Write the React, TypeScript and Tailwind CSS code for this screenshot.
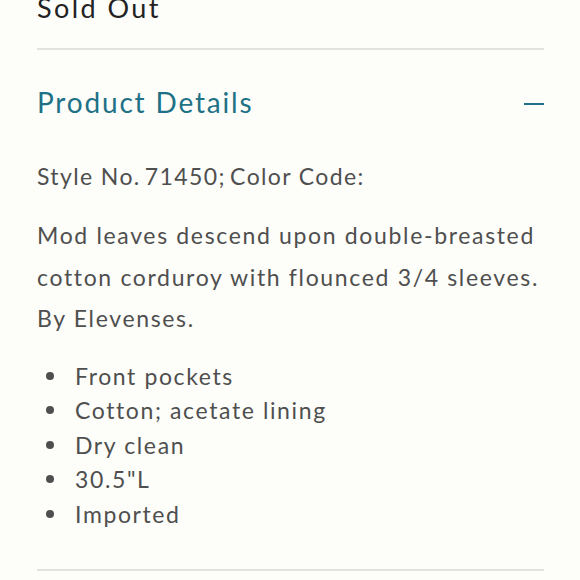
const bullets = ['Front pockets', 'Cotton; acetate lining', 'Dry clean', '30.5"L', 'Imported'];

export default function App() {
  return (
    <div
      className="min-h-[580px] w-[580px] overflow-hidden bg-[#fdfdf9] pl-[37px] pr-[36px] text-[#4f4f4f]"
      style={{ fontFamily: "Lato, 'Open Sans', sans-serif" }}
    >
      {/* Sold out row (scrolled partly off) */}
      <div className="-mt-[10px] pb-[22px] text-[27px] leading-[36px] tracking-[0.09em] text-[#222]">Sold Out</div>
      <div className="h-[2px] bg-[#e2e2df]" />

      {/* Accordion header */}
      <div className="flex items-start justify-between pt-[34px]">
        <h2 className="text-[28px] leading-[36px] tracking-[0.065em] text-[#1e7186]">Product Details</h2>
        <div className="mt-[19px] h-[2px] w-[20px] bg-[#1e7186]" />
      </div>

      {/* Body */}
      <p className="mt-[40px] text-[23px] leading-[32px] tracking-[0.06em]">Style No.&thinsp;71450;&thinsp;Color Code:</p>
      <p className="mt-[23px] text-[23px] leading-[41.5px] tracking-[0.072em]">
        Mod leaves descend upon double-breasted cotton corduroy with flounced 3/4 sleeves. By Elevenses.
      </p>
      <ul className="mt-[19px] pb-[38px]">
        {bullets.map((b) => (
          <li key={b} className="flex items-center text-[23px] leading-[34.5px] tracking-[0.07em]">
            <span className="ml-[9px] mr-[21px] h-[8px] w-[8px] shrink-0 rounded-full bg-[#4f4f4f]" />
            {b}
          </li>
        ))}
      </ul>
      <div className="h-[2px] bg-[#e2e2df]" />
    </div>
  );
}
